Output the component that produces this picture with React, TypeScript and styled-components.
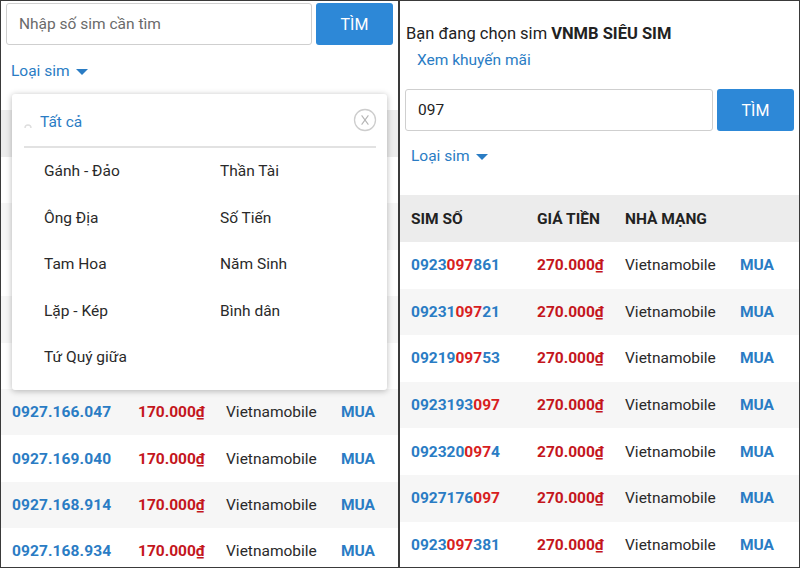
import React from 'react';
import styled, { createGlobalStyle } from 'styled-components';

const GlobalStyle = createGlobalStyle`
  body {
    margin: 0;
    background: #fff;
    font-family: Roboto, "Noto Sans", Arial, sans-serif;
  }
`;

const BLUE = '#2a7cc4';
const RED = '#c4161c';

const Frame = styled.div`
  width: 800px;
  height: 568px;
  box-sizing: border-box;
  border: 1px solid #3a3a3a;
  display: grid;
  grid-template-columns: 397px 2px 1fr;
  overflow: hidden;
  background: #fff;
`;

const Divider = styled.div`
  background: #3a3a3a;
`;

const Panel = styled.div`
  position: relative;
  display: flex;
  flex-direction: column;
  overflow: hidden;

  & > * {
    flex-shrink: 0;
  }
`;

const Intro = styled.div`
  padding: 23px 0 0 6px;
  font-size: 16.5px;
  line-height: 20px;
  color: #222;

  b {
    font-weight: 700;
  }
`;

const PromoLink = styled.a`
  margin: 6px 0 0 17px;
  font-size: 15.5px;
  line-height: 20px;
  color: ${BLUE};
  text-decoration: none;
`;

const SearchRow = styled.div<{ $top: number }>`
  display: flex;
  gap: 4px;
  padding: 0 5px;
  margin-top: ${(p) => p.$top}px;
  height: 42px;
`;

const SearchInput = styled.input`
  flex: 1;
  min-width: 0;
  box-sizing: border-box;
  border: 1px solid #cfcfcf;
  border-radius: 3px;
  padding: 0 12px;
  font-family: inherit;
  font-size: 15.5px;
  color: #222;
  outline: none;

  &::placeholder {
    color: #6a6a6a;
  }
`;

const SearchButton = styled.button`
  width: 77px;
  border: none;
  border-radius: 3px;
  background: #2d88d7;
  color: #fff;
  font-family: inherit;
  font-size: 16px;
  padding: 0;
`;

const TypeToggle = styled.div<{ $top: number; $left: number }>`
  display: flex;
  align-items: center;
  gap: 6px;
  margin: ${(p) => p.$top}px 0 0 ${(p) => p.$left}px;
  font-size: 15.5px;
  line-height: 20px;
  color: ${BLUE};
`;

const Caret = styled.span`
  width: 0;
  height: 0;
  border-left: 6px solid transparent;
  border-right: 6px solid transparent;
  border-top: 6px solid ${BLUE};
  margin-top: 2px;
`;

const Table = styled.div`
  margin-top: 29px;
  display: flex;
  flex-direction: column;

  & > * {
    flex-shrink: 0;
  }
`;

const Row = styled.div<{ $bg: string; $h: number }>`
  display: grid;
  grid-template-columns: 126px 88px 115px 1fr;
  align-items: center;
  height: ${(p) => p.$h}px;
  padding-left: 11px;
  background: ${(p) => p.$bg};
  font-size: 15.5px;
  white-space: nowrap;
`;

const HeadCell = styled.div`
  font-weight: 700;
  color: #222;
`;

const Num = styled.div<{ $spaced?: boolean }>`
  font-weight: 700;
  color: ${BLUE};
  letter-spacing: ${(p) => (p.$spaced ? '0.1px' : '0')};

  em {
    font-style: normal;
    color: #d8201e;
  }
`;

const Price = styled.div`
  font-weight: 700;
  color: ${RED};
`;

const Network = styled.div`
  color: #2a2a2a;
`;

const Buy = styled.div`
  font-weight: 700;
  color: ${BLUE};
`;

const Dropdown = styled.div`
  position: absolute;
  top: 93px;
  left: 11px;
  width: 375px;
  height: 296px;
  background: #fff;
  border-radius: 3px;
  box-shadow: 0 1px 6px rgba(0, 0, 0, 0.28);
  display: flex;
  flex-direction: column;
`;

const DropHead = styled.div`
  display: flex;
  align-items: center;
  height: 52px;
  padding: 0 10px 0 12px;
`;

const AllLabel = styled.div`
  flex: 1;
  display: flex;
  align-items: center;
  gap: 8px;
  margin-top: 4px;
  font-size: 15.5px;
  color: ${BLUE};
`;

const Rule = styled.div`
  height: 2px;
  margin: 0 11px 0 12px;
  background: #e2e2e2;
`;

const Options = styled.div`
  display: grid;
  grid-template-columns: 176px 1fr;
  grid-auto-rows: 46.5px;
  align-items: center;
  padding-left: 32px;
  font-size: 15.5px;
  color: #2a2a2a;
`;

const stripe = (i: number) => (i % 2 === 0 ? '#fff' : '#f6f6f6');

const TableHead = ({ labels = true }: { labels?: boolean }) => (
  <Row $bg="#ececec" $h={47}>
    {labels && (
      <>
        <HeadCell>SIM SỐ</HeadCell>
        <HeadCell>GIÁ TIỀN</HeadCell>
        <HeadCell>NHÀ MẠNG</HeadCell>
      </>
    )}
  </Row>
);

const marked = (n: string, q: string) => {
  const i = n.indexOf(q);
  if (i < 0) return n;
  return (
    <>
      {n.slice(0, i)}
      <em>{n.slice(i, i + q.length)}</em>
      {n.slice(i + q.length)}
    </>
  );
};

// rows under the open dropdown are only seen as their stripes
const COVERED = 5;

const leftSims = [
  '0927.166.047',
  '0927.169.040',
  '0927.168.914',
  '0927.168.934',
];

const rightSims = [
  '0923097861',
  '0923109721',
  '0921909753',
  '0923193097',
  '0923200974',
  '0927176097',
  '0923097381',
];

const options = [
  'Gánh - Đảo',
  'Thần Tài',
  'Ông Địa',
  'Số Tiến',
  'Tam Hoa',
  'Năm Sinh',
  'Lặp - Kép',
  'Bình dân',
  'Tứ Quý giữa',
];

const CloseIcon = () => (
  <svg width="24" height="24" viewBox="0 0 24 24">
    <circle cx="12" cy="12" r="10.5" fill="none" stroke="#cdcdcd" strokeWidth="1.3" />
    <path d="M8.6 7.4 L15.4 16.6 M15.4 7.4 L8.6 16.6" stroke="#b5b5b5" strokeWidth="1.1" fill="none" />
  </svg>
);

const FaintRadio = () => (
  <svg width="8" height="8" viewBox="0 0 8 8" style={{ marginTop: 6 }}>
    <path d="M1 7 A3 3 0 0 1 7 7" fill="none" stroke="#dedede" strokeWidth="1.4" />
  </svg>
);

export default function App() {
  return (
    <>
      <GlobalStyle />
      <Frame>
        <Panel>
          <SearchRow $top={2}>
            <SearchInput placeholder="Nhập số sim cần tìm" />
            <SearchButton>TÌM</SearchButton>
          </SearchRow>
          <TypeToggle $top={16} $left={10}>
            Loại sim <Caret />
          </TypeToggle>
          <Table>
            <TableHead labels={false} />
            {Array.from({ length: COVERED }).map((_, i) => (
              <Row key={i} $bg={stripe(i)} $h={46.4} />
            ))}
            {leftSims.map((n, i) => (
              <Row key={n} $bg={stripe(i + COVERED)} $h={46.4}>
                <Num $spaced>{n}</Num>
                <Price>170.000₫</Price>
                <Network>Vietnamobile</Network>
                <Buy>MUA</Buy>
              </Row>
            ))}
          </Table>

          <Dropdown>
            <DropHead>
              <AllLabel>
                <FaintRadio />
                Tất cả
              </AllLabel>
              <CloseIcon />
            </DropHead>
            <Rule />
            <Options>
              {options.map((o) => (
                <div key={o}>{o}</div>
              ))}
            </Options>
          </Dropdown>
        </Panel>

        <Divider />

        <Panel>
          <Intro>
            Bạn đang chọn sim <b>VNMB SIÊU SIM</b>
          </Intro>
          <PromoLink>Xem khuyến mãi</PromoLink>
          <SearchRow $top={19}>
            <SearchInput defaultValue="097" />
            <SearchButton>TÌM</SearchButton>
          </SearchRow>
          <TypeToggle $top={15} $left={11}>
            Loại sim <Caret />
          </TypeToggle>
          <Table>
            <TableHead />
            {rightSims.map((n, i) => (
              <Row key={n} $bg={stripe(i)} $h={46.6}>
                <Num>{marked(n, '097')}</Num>
                <Price>270.000₫</Price>
                <Network>Vietnamobile</Network>
                <Buy>MUA</Buy>
              </Row>
            ))}
          </Table>
        </Panel>
      </Frame>
    </>
  );
}
